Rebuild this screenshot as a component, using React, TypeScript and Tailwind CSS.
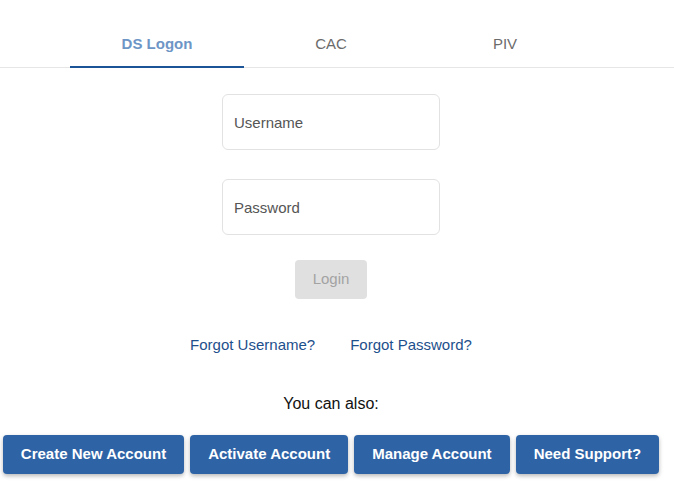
const TABS = [
  { label: "DS Logon", active: true },
  { label: "CAC", active: false },
  { label: "PIV", active: false },
];

const ACTIONS = [
  "Create New Account",
  "Activate Account",
  "Manage Account",
  "Need Support?",
];

export default function App() {
  return (
    <div className="min-h-screen w-full bg-white font-['Liberation_Sans',Arial,sans-serif]">
      <div className="border-b border-[#e6e6e6]">
        <div className="ml-[70px] flex w-[522px]">
          {TABS.map((t) => (
            <div
              key={t.label}
              className={
                t.active
                  ? "-mb-px flex-1 border-b-[2px] border-[#1b5598] pb-[14px] pt-[35px] text-center text-[15px] font-bold leading-[17px] text-[#6d95c6]"
                  : "flex-1 pb-[15px] pt-[35px] text-center text-[15px] leading-[17px] text-[#6b6b6b]"
              }
            >
              {t.label}
            </div>
          ))}
        </div>
      </div>

      <div className="flex w-[662px] flex-col items-center">
        <input
          placeholder="Username"
          className="mt-[26px] h-[56px] w-[218px] rounded-[6px] border border-[#e2e2e2] px-[11px] text-[15px] text-[#444] outline-none placeholder:text-[#555]"
        />
        <input
          type="password"
          placeholder="Password"
          className="mt-[29px] h-[56px] w-[218px] rounded-[6px] border border-[#e2e2e2] px-[11px] text-[15px] text-[#444] outline-none placeholder:text-[#555]"
        />
        <button
          disabled
          className="mt-[25px] h-[39px] w-[72px] rounded-[4px] bg-[#e0e0e0] text-[15px] text-[#a3a3a3]"
        >
          Login
        </button>

        <div className="mt-[37px] flex gap-[35px] text-[15px] leading-[17px] text-[#1d4f8c]">
          <a href="#">Forgot Username?</a>
          <a href="#">Forgot Password?</a>
        </div>

        <p className="mt-[42px] text-[16px] leading-[18px] text-[#111]">
          You can also:
        </p>

        <div className="mt-[22px] flex gap-[6px]">
          {ACTIONS.map((a) => (
            <button
              key={a}
              className="h-[39px] rounded-[4px] bg-[#2e63a6] px-[18px] text-[15px] font-bold text-white shadow-[0_2px_4px_rgba(0,0,0,.28)]"
            >
              {a}
            </button>
          ))}
        </div>
      </div>
    </div>
  );
}
